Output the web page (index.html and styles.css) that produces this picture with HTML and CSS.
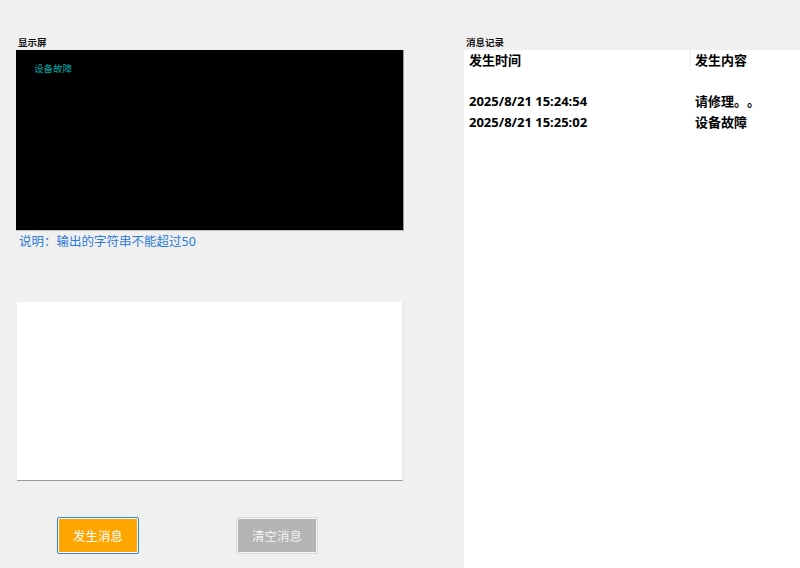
FILE: index.html
```html
<!DOCTYPE html>
<html lang="zh">
<head>
<meta charset="utf-8">
<title>显示屏</title>
<link rel="stylesheet" href="styles.css">
</head>
<body>
<div class="app">
  <section class="left">
    <div class="group-label">显示屏</div>
    <div class="screen"><span class="screen-text">设备故障</span></div>
    <div class="note">说明：输出的字符串不能超过50</div>
    <div class="input-box"></div>
    <div class="actions">
      <button class="btn btn-send">发生消息</button>
      <button class="btn btn-clear">清空消息</button>
    </div>
  </section>
  <section class="right">
    <div class="group-label log-label">消息记录</div>
    <div class="log">
      <div class="log-head">
        <div class="col-time">发生时间</div>
        <div class="col-sep"></div>
        <div class="col-msg">发生内容</div>
      </div>
      <div class="log-body">
        <div class="log-row"><div class="col-time">2025/8/21 15:24:54</div><div class="col-msg">请修理。。</div></div>
        <div class="log-row"><div class="col-time">2025/8/21 15:25:02</div><div class="col-msg">设备故障</div></div>
      </div>
    </div>
  </section>
</div>
</body>
</html>
```
FILE: styles.css
```css
* { box-sizing: border-box; }
html, body { margin: 0; padding: 0; }
body {
  width: 800px;
  height: 568px;
  overflow: hidden;
  background: #f0f0f0;
  font-family: "Noto Sans", "Noto Sans CJK SC", sans-serif;
  color: #000;
  text-spacing-trim: space-all;
}
.app {
  display: flex;
  height: 568px;
}
.left {
  width: 464px;
  padding: 35px 0 0 16px;
  display: flex;
  flex-direction: column;
}
.group-label {
  font-size: 9.5px;
  font-weight: 700;
  line-height: 15px;
  padding-left: 2px;
  color: #111;
}
.screen {
  width: 388px;
  height: 181px;
  background: #000;
  border-right: 1px solid #9a9a9a;
  border-bottom: 1px solid #bdbdbd;
  padding: 5px 0 0 18px;
}
.screen-text {
  color: #00a6a6;
  font-size: 9.5px;
  line-height: 14px;
}
.note {
  color: #2b7bd6;
  font-size: 12.5px;
  line-height: 20px;
  padding: 1px 0 0 3px;
}
.input-box {
  margin: 50px 0 0 1px;
  width: 386px;
  height: 179px;
  background: #fff;
  border-bottom: 1px solid #999;
  border-right: 1px solid #e8e8e8;
}
.actions {
  display: flex;
  gap: 97px;
  margin: 36px 0 0 41px;
}
.btn {
  width: 82px;
  height: 37px;
  border-radius: 2px;
  font-family: "Noto Sans", "Noto Sans CJK SC", sans-serif;
  font-size: 12.5px;
  color: #fff;
  padding: 0;
  cursor: pointer;
}
.btn-send {
  background: #ffa500;
  border: 1px solid #2f86d8;
  box-shadow: inset 0 0 0 1px #fff;
}
.btn-clear {
  background: #b4b4b4;
  border: 1px solid #d9d9d9;
  box-shadow: inset 0 0 0 1px #f4f4f4;
  color: #f2f2f2;
}
.right {
  flex: 1;
  padding-top: 35px;
  display: flex;
  flex-direction: column;
}
.log-label {
  font-weight: 600;
  padding-left: 2px;
}
.log {
  flex: 1;
  background: #fff;
}
.log-head {
  display: flex;
  height: 20px;
  font-size: 13px;
  font-weight: 600;
  line-height: 20px;
}
.col-time {
  width: 225px;
  padding-left: 5px;
}
.col-sep {
  width: 2px;
  background: #f4f4f4;
}
.col-msg {
  padding-left: 4px;
}
.log-body {
  padding-top: 21px;
}
.log-row {
  display: flex;
  height: 21px;
  font-size: 13px;
  font-weight: 700;
  line-height: 21px;
}
.log-row .col-msg { padding-left: 6px; }
```
